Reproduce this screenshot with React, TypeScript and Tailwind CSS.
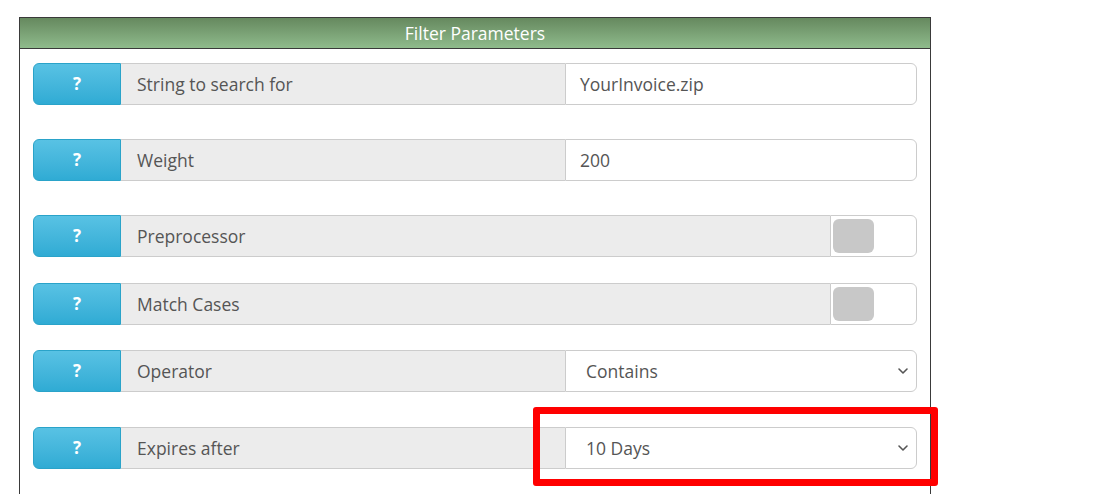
import React from "react";

const font = { fontFamily: '"Open Sans", "Noto Sans", sans-serif' };

function HelpBtn() {
  return (
    <div className="flex h-full w-[88px] shrink-0 items-center justify-center rounded-l-[6px] border border-[#2aa3c9] bg-gradient-to-b from-[#58c2e4] to-[#2fabd4] text-[17px] font-bold text-white">
      ?
    </div>
  );
}

function Label({ text, wide }: { text: string; wide?: boolean }) {
  return (
    <div
      className={`flex h-full items-center border-y border-[#cccccc] bg-[#ececec] pl-[16px] text-[17.5px] text-[#555555] ${
        wide ? "w-[709px]" : "w-[444px]"
      }`}
    >
      {text}
    </div>
  );
}

function Chevron() {
  return (
    <svg width="12" height="8" viewBox="0 0 12 8" className="mr-[5px]">
      <path d="M2 2 L6 6 L10 2" fill="none" stroke="#555" strokeWidth="1.6" strokeLinecap="round" strokeLinejoin="round" />
    </svg>
  );
}

function InputRow({ label, value, mt }: { label: string; value: string; mt: string }) {
  return (
    <div className={`flex h-[42px] ${mt}`}>
      <HelpBtn />
      <Label text={label} />
      <div className="flex h-full flex-1 items-center rounded-r-[6px] border border-[#cccccc] bg-white pl-[14px] text-[17.5px] text-[#555555]">
        {value}
      </div>
    </div>
  );
}

function ToggleRow({ label, mt }: { label: string; mt: string }) {
  return (
    <div className={`flex h-[42px] ${mt}`}>
      <HelpBtn />
      <Label text={label} wide />
      <div className="flex h-full flex-1 items-center rounded-r-[6px] border border-[#cccccc] bg-white pl-[2px]">
        <div className="h-[34px] w-[41px] rounded-[6px] bg-[#c8c8c8]" />
      </div>
    </div>
  );
}

function SelectRow({ label, value, mt }: { label: string; value: string; mt: string }) {
  return (
    <div className={`flex h-[42px] ${mt}`}>
      <HelpBtn />
      <Label text={label} />
      <div className="flex h-full flex-1 items-center justify-between rounded-r-[6px] border border-[#cccccc] bg-white pl-[20px] pr-[2px] text-[17.5px] text-[#555555]">
        <span>{value}</span>
        <Chevron />
      </div>
    </div>
  );
}

export default function App() {
  return (
    <div className="relative h-[494px] w-[1118px] overflow-hidden bg-white" style={font}>
      <div className="ml-[19px] mt-[17px] w-[912px] border-x border-t border-[#3a3a3a]">
        <div className="flex h-[31px] items-center justify-center border-b border-[#3a3a3a] bg-gradient-to-b from-[#66895f] to-[#8fbb8c] pt-[1px] text-[17.5px] text-white">
          Filter Parameters
        </div>
        <div className="px-[13px] pb-[40px]">
          <InputRow label="String to search for" value="YourInvoice.zip" mt="mt-[14px]" />
          <InputRow label="Weight" value="200" mt="mt-[34px]" />
          <ToggleRow label="Preprocessor" mt="mt-[34px]" />
          <ToggleRow label="Match Cases" mt="mt-[26px]" />
          <SelectRow label="Operator" value="Contains" mt="mt-[25px]" />
          <SelectRow label="Expires after" value="10 Days" mt="mt-[35px]" />
        </div>
      </div>
      <div className="absolute left-[533px] top-[407px] h-[79px] w-[405px] rounded-[3px] border-[7px] border-[#ff0000]" />
    </div>
  );
}
